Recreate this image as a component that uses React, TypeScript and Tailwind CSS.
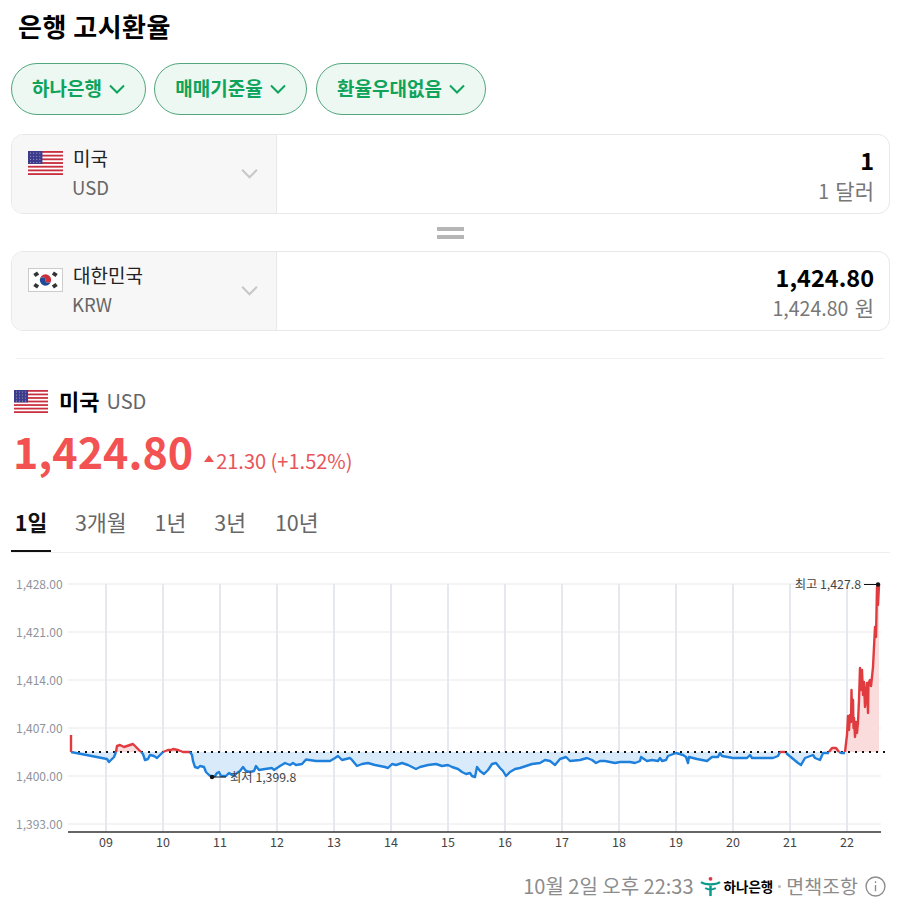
import React from "react";

const font = { fontFamily: '"Noto Sans CJK KR", "Noto Sans", sans-serif' };

type Pt = [number, number];

const blueParts: Pt[][] = [
  [[71,752],[107,759],[109,762],[112,759],[114,757],[116,752]],
  [[141,752],[143,754],[145,760],[148,759],[150,755],[154,756],[157,758],[160,755],[163,752]],
  [[190,752],[192,755],[193,761],[195,767],[198,768],[200,766],[204,767],[206,772],[209,775],[212,777],[215,776],[217,773],[219,772],[221,776],[226,776],[229,773],[232,775],[234,776],[237,773],[240,771],[243,767],[246,771],[250,772],[254,771],[256,766],[259,770],[265,769],[272,768],[274,770],[280,766],[285,763],[290,765],[293,763],[296,765],[302,764],[306,759.5],[316,761],[323,761],[330,761],[335,758],[338,756],[342,760],[346,759],[350,758],[352,760],[357,766],[362,764],[368,763],[375,765],[380,766],[385,767],[388,768],[390,766],[392,764],[396,765],[402,763],[408,765],[412,767],[416,769],[420,767],[428,765],[436,764],[442,766],[448,765],[452,767],[458,769],[462,772],[466,774],[470,773],[472,776],[475,777],[477,767],[480,771],[484,774],[488,770],[492,764],[496,763],[500,768],[503,771],[506,776],[510,772],[515,769],[520,768],[526,766],[532,764],[540,763],[545,760],[550,761],[555,765],[560,759],[566,757],[570,761],[580,760],[587,758],[592,760],[596,763],[600,761],[605,761],[610,762],[615,763],[620,762],[625,762],[630,762],[635,763],[640,761],[641,757],[644,759],[647,761],[652,760],[658,761],[660,758],[662,761],[666,760],[668,756],[676,753],[683,755],[686,757],[688,763],[689,757],[697,759],[707,761],[712,757],[718,757],[720,753],[722,756],[733,758],[747,758],[750,755],[752,758],[760,758],[773,758],[778,756],[780,752]],
  [[786,753],[792,758],[798,763],[801,765],[805,758],[813,755],[815,758],[820,760],[823,753],[829,753]],
  [[839,752],[841,753],[845,753]],
];

const redParts: Pt[][] = [
  [[71,735],[71,752]],
  [[116,752],[117,746],[120,745],[124,747],[130,745],[133,744],[137,748],[141,752]],
  [[163,752],[168,750],[171,750],[173,749],[178,750],[183,752],[190,752]],
  [[780,752],[785,752]],
  [[829,752],[832,748],[836,748],[839,752]],
  [[845,752],[847,735],[848,716],[849,730],[850,715],[851,722],[851.5,690],[852,712],[853,700],[853.5,728],[854,718],[855,737],[856,722],[857,733],[858,722],[859,700],[860,668],[861,690],[862,670],[863,695],[864,682],[865,707],[866,695],[867,683],[868,713],[868.5,683],[870,680],[871,686],[872,677],[873,667],[875,627],[876,637],[877,587],[878,605],[879,585]],
];

const poly = (p: Pt[]) => p.map(([x, y]) => `${x},${y}`).join(" ");
const closed = (p: Pt[]) => `${p[0][0]},752 ${poly(p)} ${p[p.length - 1][0]},752`;

function UsFlag({ className }: { className: string }) {
  return (
    <svg viewBox="0 0 34 23" preserveAspectRatio="none" className={className}>
      <rect width="34" height="23" fill="#fff" />
      {[0, 3.54, 7.08, 10.62, 14.16, 17.7, 21.24].map((y) => (
        <rect key={y} y={y} width="34" height="1.77" fill="#c8303f" />
      ))}
      <rect width="14" height="12.4" fill="#3c3b8e" />
      {[2, 5, 8, 11].map((x) => [2, 5, 8, 11].map((y) => <circle key={`${x}${y}`} cx={x + 0.5} cy={y} r="0.55" fill="#aab" />))}
    </svg>
  );
}

function KrFlag({ className }: { className: string }) {
  const bars = [
    [8, 6, -35],
    [26, 6, 35],
    [8, 17, 35],
    [26, 17, -35],
  ];
  return (
    <svg viewBox="0 0 34 23" preserveAspectRatio="none" className={className}>
      <rect x="0.5" y="0.5" width="33" height="22" fill="#fff" stroke="#ccc" />
      <path d="M11.5 11.5a5.5 5.5 0 0 1 11 0a2.75 2.75 0 0 1-5.5 0a2.75 2.75 0 0 0-5.5 0z" fill="#cd2e3a" />
      <path d="M11.5 11.5a5.5 5.5 0 0 0 11 0a2.75 2.75 0 0 1-5.5 0a2.75 2.75 0 0 0-5.5 0z" fill="#1f4a98" />
      {bars.map(([x, y, r]) => (
        <rect key={`${x}${y}`} x={x - 2.2} y={y - 1.8} width="4.4" height="3.6" fill="#333" transform={`rotate(${r} ${x} ${y})`} />
      ))}
    </svg>
  );
}

function Chevron({ className, w = 2 }: { className: string; w?: number }) {
  return (
    <svg viewBox="0 0 16 10" className={className} fill="none" stroke="currentColor" strokeWidth={w}>
      <path d="M1 1.5l7 7 7-7" />
    </svg>
  );
}

function HanaLogo() {
  return (
    <svg viewBox="0 0 22 22" className="w-[21px] h-[21px] shrink-0" fill="none">
      <circle cx="11" cy="3" r="2" fill="#e2344a" />
      <path d="M1 6.5c4 3 16 3 20 0" stroke="#0a9a8a" strokeWidth="2.2" />
      <path d="M5.5 12.5c3 2.2 8 2.2 11 0" stroke="#0a9a8a" strokeWidth="2" />
      <path d="M11 10v11" stroke="#0a9a8a" strokeWidth="2.6" />
    </svg>
  );
}

function Pill({ label, width }: { label: string; width: string }) {
  return (
    <button className={`${width} h-[52px] rounded-full border border-[#52a67e] bg-[#ecf8f1] flex items-center justify-center gap-[7px] text-[19px] font-bold text-[#0fa35c]`}>
      <span className="leading-[24px] -mt-[2px]">{label}</span>
      <Chevron className="w-[16px] h-[10px]" />
    </button>
  );
}

function Converter({ flag, name, code, value, unit, unitWord }: { flag: React.ReactNode; name: string; code: string; value: string; unit: string; unitWord: string }) {
  return (
    <div className="h-[80px] rounded-[12px] border border-[#e8e8e8] flex overflow-hidden">
      <div className="w-[265px] shrink-0 bg-[#f7f7f7] border-r border-[#e8e8e8] flex pl-[16px] pt-[9px] relative">
        {flag}
        <div className="ml-[10px] flex flex-col">
          <span className="text-[19px] leading-[27px] text-[#222]">{name}</span>
          <span className="text-[18.5px] leading-[33px] text-[#666] -ml-[1px]">{code}</span>
        </div>
        <Chevron className="absolute right-[18px] top-[33px] w-[17px] h-[11px] text-[#c8c8c8]" />
      </div>
      <div className="flex-1 flex flex-col items-end pr-[15px] pt-[9px]">
        <span className="text-[23.5px] leading-[33px] font-bold text-black">{value}</span>
        <span className="text-[19.5px] leading-[26px] text-[#777]">
          {unit} <span className="text-[21px] ml-[2px]">{unitWord}</span>
        </span>
      </div>
    </div>
  );
}

function Chart() {
  const ys = [584, 632, 680, 728, 776, 824];
  const yl = ["1,428.00", "1,421.00", "1,414.00", "1,407.00", "1,400.00", "1,393.00"];
  const xs = [106, 163, 220, 277, 334, 391, 448, 505, 562, 619, 676, 733, 790, 847];
  const xl = ["09", "10", "11", "12", "13", "14", "15", "16", "17", "18", "19", "20", "21", "22"];
  return (
    <svg viewBox="0 570 900 290" className="w-[900px] h-[290px] block" style={font}>
      {ys.map((y) => (
        <line key={y} x1="68" x2="881" y1={y} y2={y} stroke="#f0f0f2" strokeWidth="1.4" />
      ))}
      {xs.map((x) => (
        <line key={x} x1={x} x2={x} y1="584" y2="832" stroke="#e6e8ef" strokeWidth="2" />
      ))}
      {yl.map((t, i) => (
        <text key={t} x="16" y={ys[i] + 4.5} fontSize="12" fill="#8f939b">{t}</text>
      ))}
      {blueParts.map((p, i) => (
        <polygon key={i} points={closed(p)} fill="#d9ebfb" />
      ))}
      {redParts.map((p, i) => (
        <polygon key={i} points={closed(p)} fill="#fbdcdc" />
      ))}
      <line x1="71" x2="885" y1="752" y2="752" stroke="#111" strokeWidth="2" strokeDasharray="2 5" />
      {blueParts.map((p, i) => (
        <polyline key={i} points={poly(p)} fill="none" stroke="#1f80dc" strokeWidth="2.4" strokeLinejoin="round" />
      ))}
      {redParts.map((p, i) => (
        <polyline key={i} points={poly(p)} fill="none" stroke="#e03c40" strokeWidth="2.4" strokeLinejoin="round" />
      ))}
      <line x1="68" x2="881" y1="832" y2="832" stroke="#333" strokeWidth="1.5" />
      {xl.map((t, i) => (
        <text key={t} x={xs[i]} y="847" fontSize="12.5" fill="#444" textAnchor="middle">{t}</text>
      ))}
      <line x1="212" x2="226" y1="777" y2="777" stroke="#111" strokeWidth="1" />
      <circle cx="212" cy="777" r="2.2" fill="#111" />
      <text x="230" y="782" fontSize="12.3" fill="#444">최저 1,399.8</text>
      <line x1="864" x2="878" y1="584.5" y2="584.5" stroke="#111" strokeWidth="1" />
      <circle cx="878" cy="584.5" r="2.2" fill="#111" />
      <text x="861" y="589" fontSize="12.3" fill="#444" textAnchor="end">최고 1,427.8</text>
    </svg>
  );
}

export default function App() {
  return (
    <div className="w-[900px] h-[911px] bg-white overflow-hidden" style={font}>
      <h1 className="pl-[18px] pt-[8px] pb-[2px] text-[26px] leading-[36px] font-bold text-black tracking-[0.5px]">은행 고시환율</h1>
      <div className="pl-[11px] pt-[17px] flex gap-[8px]">
        <Pill label="하나은행" width="w-[135px]" />
        <Pill label="매매기준율" width="w-[153px]" />
        <Pill label="환율우대없음" width="w-[170px] ml-[1px]" />
      </div>
      <div className="pl-[11px] pr-[10px] pt-[19px]">
        <Converter
          flag={<UsFlag className="w-[35px] h-[24px] mt-[7px]" />}
          name="미국"
          code="USD"
          value="1"
          unit="1"
          unitWord="달러"
        />
        <div className="h-[37px] flex flex-col items-center justify-center gap-[4px]">
          <div className="w-[27px] h-[4px] bg-[#b5b5b5]" />
          <div className="w-[27px] h-[4px] bg-[#b5b5b5]" />
        </div>
        <Converter
          flag={<KrFlag className="w-[35px] h-[24px] mt-[7px]" />}
          name="대한민국"
          code="KRW"
          value="1,424.80"
          unit="1,424.80"
          unitWord="원"
        />
      </div>
      <div className="mx-[16px] mt-[27px] border-t border-[#f0f0f0]" />
      <div className="pl-[14px] pt-[26px] flex items-center h-[58px]">
        <UsFlag className="w-[34px] h-[23px]" />
        <span className="ml-[11px] text-[22px] font-bold text-black -mt-[2px]">미국</span>
        <span className="ml-[7px] text-[20px] text-[#666]">USD</span>
      </div>
      <div className="mt-[4px] pl-[13px] flex items-baseline h-[58px]">
        <span className="text-[43px] leading-[58px] font-bold text-[#f25252]">1,424.80</span>
        <span className="ml-[11px] w-0 h-0 self-center mt-[17px] border-x-[5px] border-x-transparent border-b-[7px] border-b-[#ef5350]" />
        <span className="ml-[2px] text-[20px] text-[#e8545a]">21.30 (+1.52%)</span>
      </div>
      <div className="mt-[21px] ml-[11px] mr-[10px] border-b border-[#eeeeee] flex h-[53px] text-[21.5px] text-[#666]">
        <span className="w-[40px] h-[52px] text-center leading-[44px] font-bold text-[#111] border-b-2 border-[#111]">1일</span>
        <span className="ml-[24px] leading-[44px]">3개월</span>
        <span className="ml-[28px] leading-[44px]">1년</span>
        <span className="ml-[28px] leading-[44px]">3년</span>
        <span className="ml-[29px] leading-[44px]">10년</span>
      </div>
      <div className="mt-[17px]">
        <Chart />
      </div>
      <div className="flex items-center justify-end pr-[14px] h-[40px] mt-[6px]">
        <span className="text-[20px] text-[#8c8c8c] -mr-[1px]">10월 2일 오후 22:33</span>
        <span className="ml-[7px]"><HanaLogo /></span>
        <span className="ml-[3px] text-[13.5px] font-bold text-black">하나은행</span>
        <span className="mx-[5px] w-[3px] h-[3px] rounded-full bg-[#bbbbbb]" />
        <span className="text-[19.5px] text-[#8c8c8c]">면책조항</span>
        <svg viewBox="0 0 20 20" className="ml-[7px] w-[21px] h-[21px]" fill="none" stroke="#8c8c8c" strokeWidth="1.3">
          <circle cx="10" cy="10" r="9" />
          <path d="M10 8.5v6M10 5v1.6" />
        </svg>
      </div>
    </div>
  );
}
